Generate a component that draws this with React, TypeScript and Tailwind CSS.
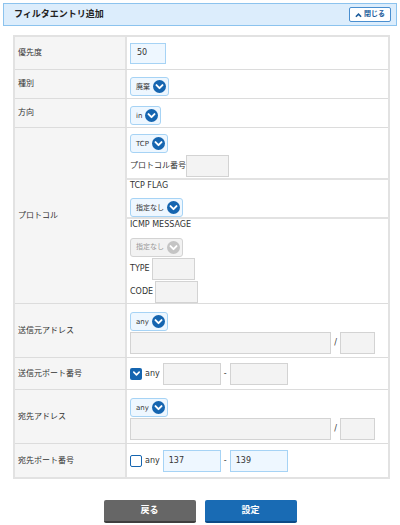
import type { ReactNode } from "react";

const FONT = "font-['DejaVu_Sans','Noto_Sans_CJK_JP',sans-serif]";

function Chevron({ disabled }: { disabled?: boolean }) {
  return (
    <svg width="13" height="13" viewBox="0 0 16 16" className="shrink-0">
      <circle cx="8" cy="8" r="8" fill={disabled ? "#c4c4c4" : "#1565b0"} />
      <path d="M4.3 6.3 8 10l3.7-3.7" fill="none" stroke="#fff" strokeWidth="2.4" strokeLinecap="round" strokeLinejoin="round" />
    </svg>
  );
}

function Select({ label, disabled }: { label: string; disabled?: boolean }) {
  return (
    <div
      className={
        disabled
          ? "inline-flex h-[19px] items-center gap-[3px] rounded-[3px] border border-[#d3d3d3] bg-[#f2f2f2] pl-[5px] pr-[2px] text-[7px] text-[#999]"
          : "inline-flex h-[19px] items-center gap-[3px] rounded-[3px] border border-[#a6d3f5] bg-[#eef7ff] pl-[5px] pr-[2px] text-[7px] text-[#333]"
      }
    >
      <span>{label}</span>
      <Chevron disabled={disabled} />
    </div>
  );
}

function Field({ w, value, active }: { w: string; value?: string; active?: boolean }) {
  return (
    <div
      className={`${w} flex h-[22px] items-center border px-[5px] text-[8px] text-[#333] ${
        active ? "border-[#a6d3f5] bg-[#eef7ff]" : "border-[#d3d3d3] bg-[#f3f3f3]"
      }`}
    >
      {value}
    </div>
  );
}

function Check({ on }: { on?: boolean }) {
  return on ? (
    <div className="flex h-[12px] w-[12px] items-center justify-center rounded-[2px] bg-[#1565b0]">
      <svg width="9" height="9" viewBox="0 0 10 10">
        <path d="M2 3.5 5 6.5 8 3.5" fill="none" stroke="#fff" strokeWidth="1.8" strokeLinecap="round" strokeLinejoin="round" />
      </svg>
    </div>
  ) : (
    <div className="h-[12px] w-[12px] rounded-[2px] border-[1.5px] border-[#1565b0] bg-white" />
  );
}

function Row({ label, h, children, last }: { label: string; h: string; children: ReactNode; last?: boolean }) {
  return (
    <div className={`flex ${h} ${last ? "" : "border-b border-[#dcdcdc]"}`}>
      <div className="flex w-[112px] shrink-0 items-center border-r-2 border-[#e2e2e2] bg-[#f5f5f5] pl-[3px] text-[8px] text-[#333]">
        {label}
      </div>
      <div className="flex min-w-0 flex-1 flex-col justify-center pl-[3px]">{children}</div>
    </div>
  );
}

function AddressCell() {
  return (
    <div className="flex flex-col gap-[1px]">
      <div>
        <Select label="any" />
      </div>
      <div className="flex items-center">
        <Field w="w-[201px]" />
        <span className="w-[9px] text-center text-[8px] text-[#333]">/</span>
        <Field w="w-[35px]" />
      </div>
    </div>
  );
}

function PortCell({ checked, from, to }: { checked?: boolean; from?: string; to?: string }) {
  return (
    <div className="flex items-center">
      <Check on={checked} />
      <span className="ml-[3px] mr-[3px] text-[8px] text-[#333]">any</span>
      <Field w="w-[58px]" value={from} active={!checked} />
      <span className="w-[9px] text-center text-[8px] text-[#333]">-</span>
      <Field w="w-[58px]" value={to} active={!checked} />
    </div>
  );
}

export default function App() {
  return (
    <div className={`h-[525px] w-[400px] bg-white ${FONT}`}>
      <div className="mx-[3px] mt-[3px] flex h-[23px] items-center justify-between border border-[#8cc3ee] bg-[#dcedfc] pl-[10px] pr-[5px]">
        <span className="text-[9px] font-bold text-[#222]">フィルタエントリ追加</span>
        <div className="flex h-[15px] w-[42px] items-center justify-center gap-[2px] rounded-[2px] border border-[#4a8fd0] bg-white text-[7px] font-bold text-[#1a5a9a]">
          <svg width="7" height="6" viewBox="0 0 8 6">
            <path d="M1 5 4 2l3 3" fill="none" stroke="#1a5a9a" strokeWidth="1.8" />
          </svg>
          閉じる
        </div>
      </div>

      <div className="ml-[13px] mt-[9px] w-[377px] border-2 border-[#e2e2e2]">
        <Row label="優先度" h="h-[33px]">
          <div className="flex h-[21px] w-[36px] items-center border border-[#a6d3f5] bg-[#eef7ff] pl-[6px] text-[8px] text-[#333]">
            50
          </div>
        </Row>
        <Row label="種別" h="h-[29px]">
          <div>
            <Select label="廃棄" />
          </div>
        </Row>
        <Row label="方向" h="h-[29px]">
          <div>
            <Select label="in" />
          </div>
        </Row>

        <div className="flex h-[176px] border-b border-[#dcdcdc]">
          <div className="flex w-[112px] shrink-0 items-center border-r-2 border-[#e2e2e2] bg-[#f5f5f5] pl-[3px] text-[8px] text-[#333]">
            プロトコル
          </div>
          <div className="flex flex-1 flex-col">
            <div className="flex h-[52px] flex-col justify-center gap-[2px] border-b-2 border-[#e2e2e2] pl-[3px]">
              <div>
                <Select label="TCP" />
              </div>
              <div className="flex items-center text-[8px] text-[#333]">
                <span>プロトコル番号</span>
                <Field w="w-[43px]" />
              </div>
            </div>
            <div className="flex h-[39px] flex-col justify-center gap-[1px] border-b-2 border-[#e2e2e2] pl-[3px]">
              <span className="text-[8px] leading-[12px] text-[#333]">TCP FLAG</span>
              <div>
                <Select label="指定なし" />
              </div>
            </div>
            <div className="flex flex-1 flex-col justify-center gap-[1px] pl-[3px]">
              <span className="text-[8px] leading-[12px] text-[#333]">ICMP MESSAGE</span>
              <div>
                <Select label="指定なし" disabled />
              </div>
              <div className="flex items-center gap-[2px] text-[8px] text-[#333]">
                <span>TYPE</span>
                <Field w="w-[43px]" />
              </div>
              <div className="flex items-center gap-[2px] text-[8px] text-[#333]">
                <span>CODE</span>
                <Field w="w-[43px]" />
              </div>
            </div>
          </div>
        </div>

        <Row label="送信元アドレス" h="h-[54px]">
          <AddressCell />
        </Row>
        <Row label="送信元ポート番号" h="h-[32px]">
          <PortCell checked />
        </Row>
        <Row label="宛先アドレス" h="h-[54px]">
          <AddressCell />
        </Row>
        <Row label="宛先ポート番号" h="h-[33px]" last>
          <PortCell from="137" to="139" />
        </Row>
      </div>

      <div className="mt-[21px] flex justify-center gap-[9px]">
        <button className="h-[23px] w-[92px] rounded-[2px] border-b-2 border-[#3e3e3e] bg-[#666] text-[9px] font-bold text-white">
          戻る
        </button>
        <button className="h-[23px] w-[92px] rounded-[2px] border-b-2 border-[#0c4a86] bg-[#196bb4] text-[9px] font-bold text-white">
          設定
        </button>
      </div>
    </div>
  );
}
